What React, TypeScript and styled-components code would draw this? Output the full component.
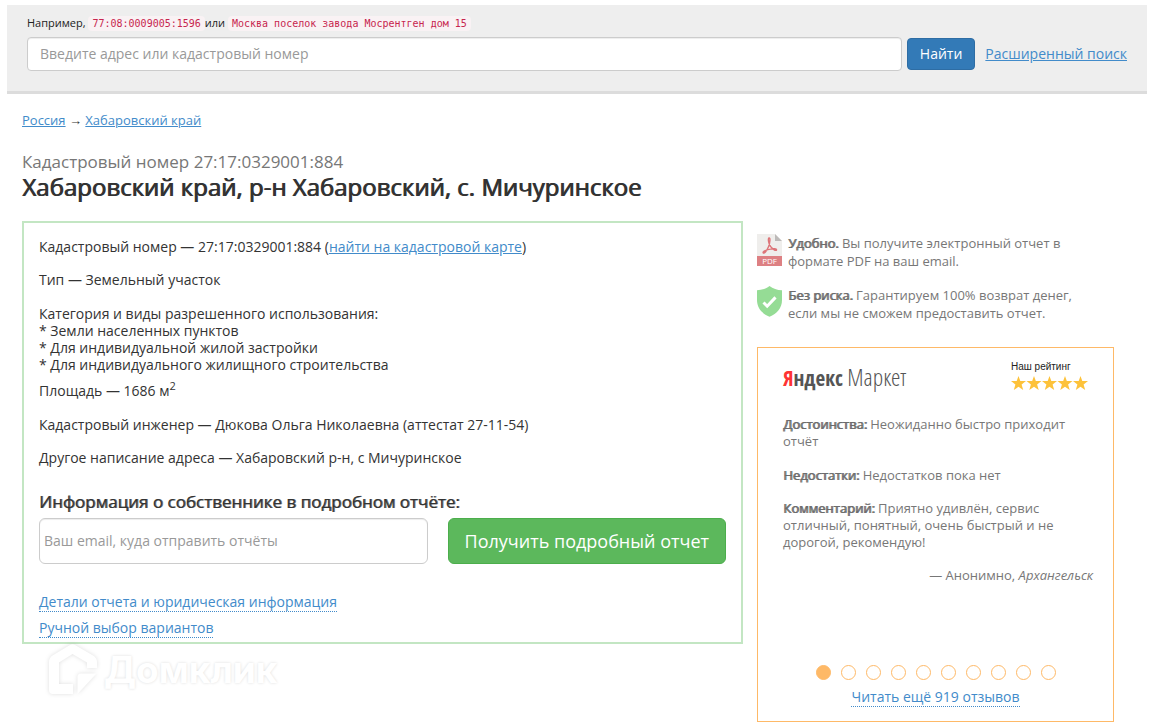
import React from "react";
import styled, { createGlobalStyle } from "styled-components";

const GlobalStyle = createGlobalStyle`
  * { box-sizing: border-box; }
  body {
    margin: 0;
    background: #fff;
    color: #333;
    font: 14px/17px "Open Sans", "Noto Sans", sans-serif;
  }
  h1, h2, p, ul { margin: 0; padding: 0; }
  button, input { font-family: inherit; }
`;

const Page = styled.div`
  padding: 5px 28px 0 7px;
`;

const SearchBar = styled.header`
  padding: 9px 20px 20px;
  background: #eee;
  border-bottom: 3px solid #dcdcdc;
`;

const Hint = styled.p`
  font-size: 11px;
  line-height: 17px;
  color: #222;
`;

const Code = styled.code`
  padding: 2px 4px;
  border-radius: 4px;
  background: #f9f2f4;
  color: #c7254e;
  font: 10px/13px "DejaVu Sans Mono", monospace;
`;

const SearchRow = styled.form`
  display: flex;
  align-items: baseline;
  margin-top: 6px;
`;

const TextInput = styled.input<{ $large?: boolean }>`
  flex: 1;
  min-width: 0;
  height: ${(p) => (p.$large ? 46 : 34)}px;
  padding: ${(p) => (p.$large ? "0 4px 2px" : "0 12px 2px")};
  border: 1px solid #ccc;
  border-radius: ${(p) => (p.$large ? 6 : 4)}px;
  background: #fff;
  box-shadow: inset 0 1px 1px rgba(0, 0, 0, 0.075);
  color: #555;
  font-size: 14px;
  &::placeholder { color: #999; opacity: 1; }
`;

const Button = styled.button<{ $large?: boolean }>`
  height: ${(p) => (p.$large ? 46 : 32)}px;
  margin: ${(p) => (p.$large ? "0 0 0 20px" : "0 10px 0 5px")};
  padding: ${(p) => (p.$large ? "0 16px" : "0 12px 2px")};
  border: 1px solid ${(p) => (p.$large ? "#4cae4c" : "#2e6da4")};
  border-radius: ${(p) => (p.$large ? 6 : 4)}px;
  background: ${(p) => (p.$large ? "#5cb85c" : "#337ab7")};
  color: #fff;
  font-size: ${(p) => (p.$large ? 18 : 14)}px;
  white-space: nowrap;
  cursor: pointer;
`;

const Link = styled.a<{ $dotted?: boolean }>`
  color: #428bca;
  text-decoration: ${(p) => (p.$dotted ? "none" : "underline")};
  border-bottom: ${(p) => (p.$dotted ? "1px dotted #428bca" : "0")};
`;

const Content = styled.main`
  padding: 0 33px 0 15px;
`;

const Breadcrumbs = styled.nav`
  padding-top: 18px;
  font-size: 13px;
`;

const Kicker = styled.p`
  margin-top: 22px;
  color: #777;
  font-size: 17px;
  line-height: 22px;
`;

const Title = styled.h1`
  font-size: 24px;
  line-height: 28px;
  font-weight: 400;
  text-shadow: 1px 0 0 currentColor;
`;

const Columns = styled.div`
  display: grid;
  grid-template-columns: 721fr 357fr;
  gap: 14px;
  align-items: start;
  margin-top: 20px;
`;

const Details = styled.section`
  padding: 15px 15px 4px;
  border: 2px solid #c3e6c3;
`;

const Fact = styled.p<{ $gap?: number }>`
  margin-bottom: ${(p) => p.$gap ?? 16}px;
  sup { font-size: 11px; line-height: 0; }
`;

const FormTitle = styled.h2`
  margin-top: 25px;
  font-size: 17px;
  line-height: 22px;
  font-weight: 400;
  text-shadow: 1px 0 0 rgba(51, 51, 51, 0.7);
`;

const OrderRow = styled.form`
  display: flex;
  margin: 5px 0 28px;
`;

const MoreLine = styled.p`
  line-height: 20px;
  margin-bottom: 6px;
  &:last-child { margin-bottom: 0; }
`;

const Watermark = styled.div`
  display: flex;
  align-items: center;
  margin-left: 26px;
  color: #fff;
  font: 700 37px/52px "Inter", "Open Sans", sans-serif;
  text-shadow: 0 0 3px rgba(0, 0, 0, 0.14);
  svg { margin-right: 6px; overflow: visible; filter: drop-shadow(0 0 2px rgba(0, 0, 0, 0.13)); }
`;

const Aside = styled.aside`
  padding-top: 13px;
  color: #777;
  font-size: 13px;
`;

const Benefit = styled.p`
  display: flex;
  gap: 6px;
  margin-bottom: 16px;
  line-height: 18px;
  svg { flex: none; }
`;

const Strong = styled.strong`
  font-weight: 400;
  color: #6c6c6c;
  text-shadow: 1px 0 0 currentColor;
`;

const ReviewCard = styled.section`
  display: flex;
  flex-direction: column;
  min-height: 375px;
  margin-top: 25px;
  padding: 12px 20px 16px;
  border: 1px solid #feb967;
`;

const CardHead = styled.div`
  display: flex;
  justify-content: space-between;
  padding: 0 4px 0 5px;
`;

const MarketLogo = styled.div`
  color: #555;
  font: 300 24px/34px "Open Sans Condensed Light", "Open Sans Condensed", "Open Sans", sans-serif;
  white-space: nowrap;
`;

const MarketBrand = styled.b`
  display: inline-block;
  font: 700 21px/34px "Open Sans Condensed", "Open Sans", sans-serif;
  &::first-letter { color: #f33; }
`;

const Rating = styled.div`
  color: #222;
  font: 10px/14px "Liberation Sans", sans-serif;
  svg { display: block; margin-top: 2px; }
`;

const Review = styled.div`
  flex: 1;
  padding: 21px 0 0 5px;
  p { margin-bottom: 17px; }
  p + p { margin-bottom: 16px; }
`;

const Author = styled.div`
  text-align: right;
`;

const Dots = styled.div`
  display: flex;
  justify-content: center;
  gap: 10px;
  margin-bottom: 8px;
`;

const Dot = styled.button<{ $active?: boolean }>`
  width: 15px;
  height: 15px;
  padding: 0;
  border: 1px solid #feb967;
  border-radius: 50%;
  background: ${(p) => (p.$active ? "#feb967" : "#fff")};
  cursor: pointer;
`;

const MoreReviews = styled.div`
  text-align: center;
  font-size: 14px;
`;

const STAR = "M7.500 0l1.800 5H15l-4.400 3.400L12.200 14 7.500 10.800 2.800 14l1.600-5.600L0 5h5.700z";

const PdfIcon = () => (
  <svg width="25" height="32" viewBox="0 0 25 32" aria-hidden="true">
    <path d="M0 0h18l7 7v16H0z" fill="#efeeec" />
    <path d="M18 0l7 7h-7z" fill="#bdbab9" />
    <path d="M0 22h25v10H0z" fill="#dd8083" />
    <path
      d="M6.200 18.800c-.9-1.300 4.100-3.200 7.100-3.700 3.100-.6 6.500-.5 6.200.9-.4 1.200-3.900-.7-5.800-3.300-1.800-2.200-3.100-8-1.700-8.800 1.600-.6.900 5.400-.4 8.600-1.300 3.300-4.400 7.800-5.400 6.300z"
      fill="none"
      stroke="#dd7478"
      strokeWidth="1.400"
    />
    <text x="12.500" y="29.800" textAnchor="middle" fontFamily="Open Sans" fontSize="8" fill="#fff">PDF</text>
  </svg>
);

const ShieldIcon = () => (
  <svg width="25" height="32" viewBox="0 0 25 32" aria-hidden="true">
    <path d="M12.500 0C9 2.800 5 4 0 4.300V14c0 8 5 13.500 12.500 16.800C20 27.500 25 22 25 14V4.300C20 4 16 2.800 12.500 0z" fill="#95dc95" />
    <path d="M6.500 16.500l3.700 3.700 8.300-8.800" fill="none" stroke="#fff" strokeWidth="3" />
  </svg>
);

const HouseLogo = () => (
  <svg width="50" height="52" viewBox="0 0 50 52" aria-hidden="true">
    <path
      d="M22 1Q24.500-.5 27 1L45 11.500Q49 14 49 18V24H39V18.500L24.500 10 11 18.500V40H25V50H5Q1 50 1 46V18Q1 14 4.500 11.500z"
      fill="#fff"
    />
    <path d="M29.500 50V33Q29.500 29.500 33 29.500H48.500z" fill="#fff" />
  </svg>
);

export default function App() {
  return (
    <Page>
      <GlobalStyle />
      <SearchBar>
        <Hint>
          Например, <Code>77:08:0009005:1596</Code>или <Code>Москва поселок завода Мосрентген дом 15</Code>
        </Hint>
        <SearchRow>
          <TextInput aria-label="Адрес или кадастровый номер" placeholder="Введите адрес или кадастровый номер" />
          <Button type="button">Найти</Button>
          <Link href="#search">Расширенный поиск</Link>
        </SearchRow>
      </SearchBar>

      <Content>
        <Breadcrumbs>
          <Link href="#russia">Россия</Link> → <Link href="#region">Хабаровский край</Link>
        </Breadcrumbs>
        <Kicker>Кадастровый номер 27:17:0329001:884</Kicker>
        <Title>Хабаровский край, р-н Хабаровский, с. Мичуринское</Title>

        <Columns>
          <div>
            <Details>
              <Fact>
                Кадастровый номер — 27:17:0329001:884 (<Link href="#map">найти на кадастровой карте</Link>)
              </Fact>
              <Fact $gap={17}>Тип — Земельный участок</Fact>
              <Fact $gap={9}>
                Категория и виды разрешенного использования:
                <br />* Земли населенных пунктов
                <br />* Для индивидуальной жилой застройки
                <br />* Для индивидуального жилищного строительства
              </Fact>
              <Fact $gap={17}>
                Площадь — 1686 м<sup>2</sup>
              </Fact>
              <Fact>Кадастровый инженер — Дюкова Ольга Николаевна (аттестат 27-11-54)</Fact>
              <Fact>Другое написание адреса — Хабаровский р-н, с Мичуринское</Fact>

              <FormTitle>Информация о собственнике в подробном отчёте:</FormTitle>
              <OrderRow>
                <TextInput $large type="email" aria-label="Ваш email" placeholder="Ваш email, куда отправить отчёты" />
                <Button $large type="button">Получить подробный отчет</Button>
              </OrderRow>
              <MoreLine>
                <Link $dotted href="#details">Детали отчета и юридическая информация</Link>
              </MoreLine>
              <MoreLine>
                <Link $dotted href="#manual">Ручной выбор вариантов</Link>
              </MoreLine>
            </Details>
            <Watermark>
              <HouseLogo />
              Домклик
            </Watermark>
          </div>

          <Aside>
            <Benefit>
              <PdfIcon />
              <span>
                <Strong>Удобно.</Strong> Вы получите электронный отчет в<br />
                формате PDF на ваш email.
              </span>
            </Benefit>
            <Benefit>
              <ShieldIcon />
              <span>
                <Strong>Без риска.</Strong> Гарантируем 100% возврат денег,
                <br />
                если мы не сможем предоставить отчет.
              </span>
            </Benefit>

            <ReviewCard>
              <CardHead>
                <MarketLogo>
                  <MarketBrand>Яндекс</MarketBrand> Маркет
                </MarketLogo>
                <Rating>
                  Наш рейтинг
                  <svg width="78" height="15" viewBox="0 0 78 15" role="img" aria-label="5 из 5">
                    {[0, 1, 2, 3, 4].map((i) => (
                      <path key={i} d={STAR} transform={`translate(${i * 15.5} 0)`} fill="#fdc23a" />
                    ))}
                  </svg>
                </Rating>
              </CardHead>
              <Review>
                <p>
                  <Strong>Достоинства:</Strong> Неожиданно быстро приходит отчёт
                </p>
                <p>
                  <Strong>Недостатки:</Strong> Недостатков пока нет
                </p>
                <p>
                  <Strong>Комментарий:</Strong> Приятно удивлён, сервис отличный, понятный, очень быстрый и не дорогой,
                  рекомендую!
                </p>
                <Author>
                  — Анонимно, <em>Архангельск</em>
                </Author>
              </Review>
              <Dots>
                {Array.from({ length: 10 }, (_, i) => (
                  <Dot key={i} type="button" $active={i === 0} aria-label={`Отзыв ${i + 1}`} />
                ))}
              </Dots>
              <MoreReviews>
                <Link $dotted href="#reviews">Читать ещё 919 отзывов</Link>
              </MoreReviews>
            </ReviewCard>
          </Aside>
        </Columns>
      </Content>
    </Page>
  );
}
